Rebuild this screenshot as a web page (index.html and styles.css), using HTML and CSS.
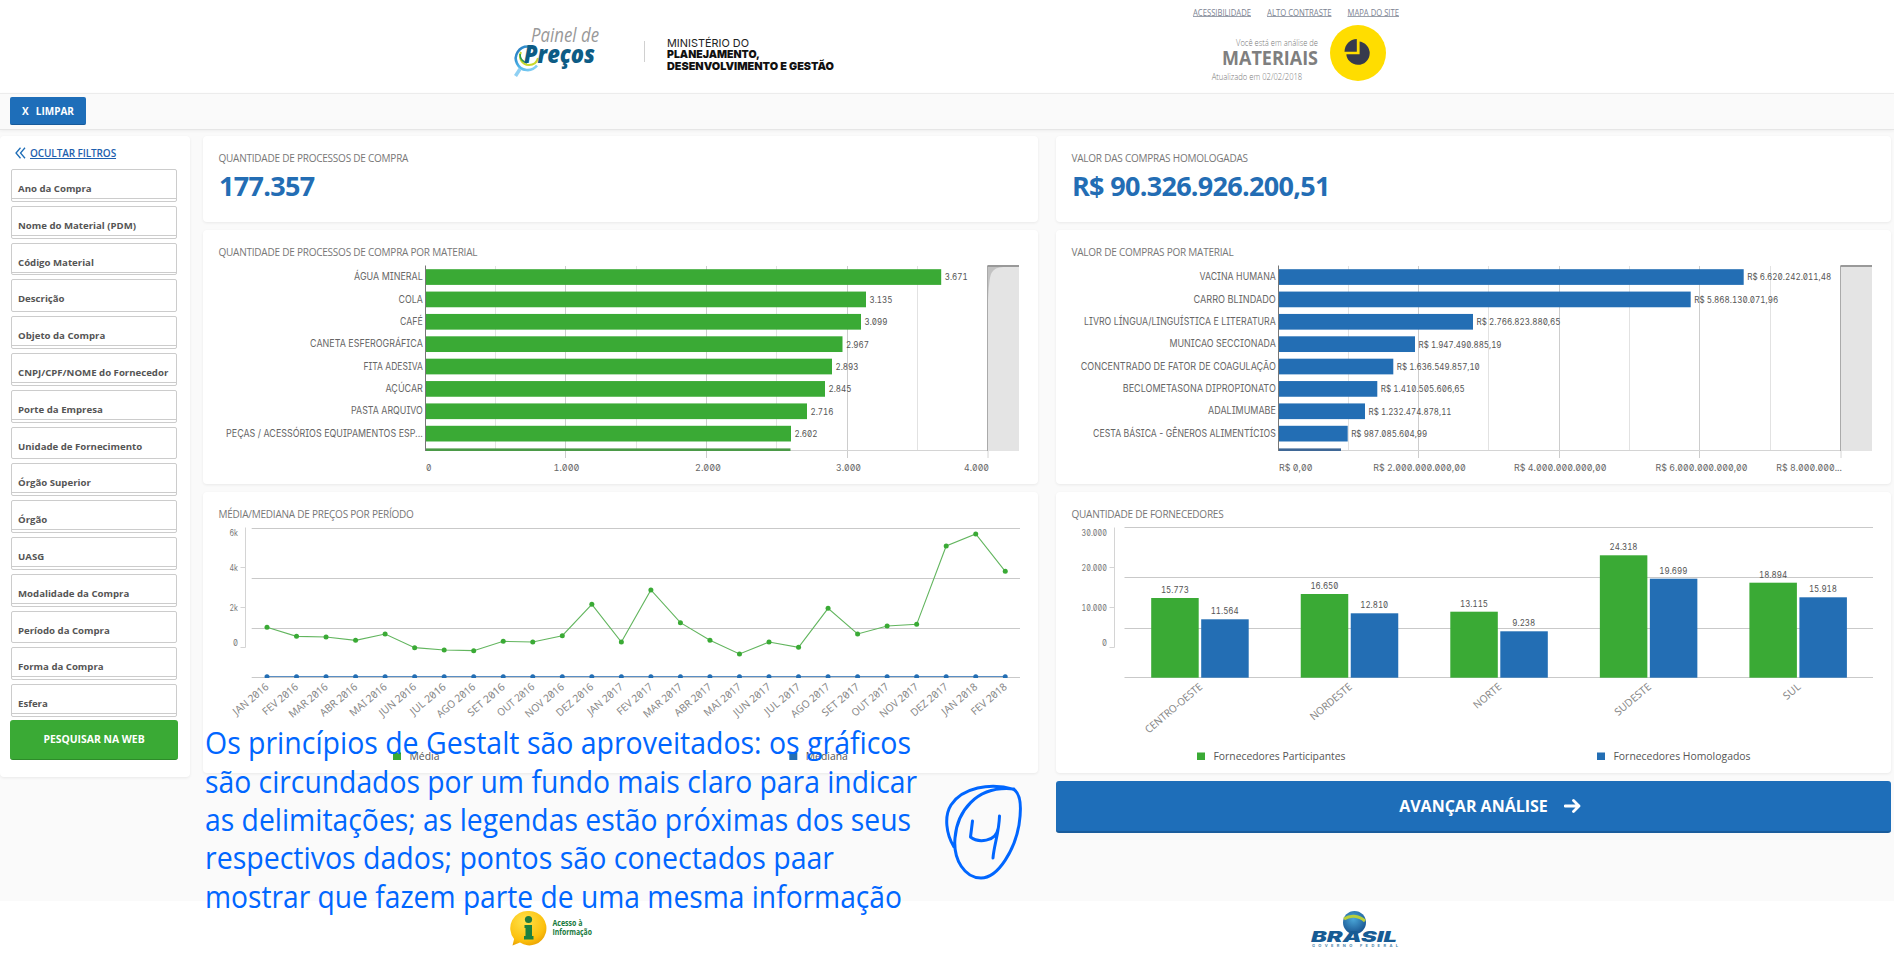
FILE: index.html
```html
<!DOCTYPE html>
<html lang="pt-BR">
<head>
<meta charset="utf-8">
<title>Painel de Preços</title>
<link rel="stylesheet" href="styles.css">
</head>
<body>
<header class="header">
  <svg class="brand" width="340" height="93" viewBox="500 0 340 93">
    <defs>
      <linearGradient id="ring" x1="0" y1="0" x2="1" y2="1"><stop offset="0" stop-color="#1b6fb8"/><stop offset=".5" stop-color="#4fb6ea"/><stop offset="1" stop-color="#8fd3f5"/></linearGradient>
    </defs>
    <path d="M520 69l-4.500 7" stroke="#8fd0f3" stroke-width="3.500" fill="none"/>
    <path d="M528 46.500a11.800 11.800 0 1 0 9 19" stroke="url(#ring)" stroke-width="2.600" fill="none"/>
    <path d="M521 52c-3 6 1 13 8 13 5 0 8-3 9-7" stroke="#c9d82a" stroke-width="2" fill="none"/>
    <path d="M520 54c0 5 3 8 7 9" stroke="#2f9a4a" stroke-width="1.600" fill="none"/>
    <text class="logo-top" x="531" y="42" textLength="68" lengthAdjust="spacingAndGlyphs">Painel de</text>
    <text class="logo-main" x="524" y="63" textLength="71" lengthAdjust="spacingAndGlyphs">Preços</text>
    <path d="M644.500 41v21" stroke="#d0d0d0"/>
    <text class="gov" x="667" y="46.500" textLength="82" lengthAdjust="spacingAndGlyphs">MINISTÉRIO DO</text>
    <text class="gov heavy" x="667" y="58" textLength="93" lengthAdjust="spacingAndGlyphs">PLANEJAMENTO,</text>
    <text class="gov heavy" x="667" y="69.500" textLength="167" lengthAdjust="spacingAndGlyphs">DESENVOLVIMENTO E GESTÃO</text>
  </svg>
  <svg class="status" width="220" height="93" viewBox="1190 0 220 93">
    <g class="toplink">
      <text x="1193" y="15.500" textLength="58" lengthAdjust="spacingAndGlyphs">ACESSIBILIDADE</text>
      <text x="1267" y="15.500" textLength="64.500" lengthAdjust="spacingAndGlyphs">ALTO CONTRASTE</text>
      <text x="1347.500" y="15.500" textLength="51.500" lengthAdjust="spacingAndGlyphs">MAPA DO SITE</text>
    </g>
    <path d="M1193 16.500h58M1267 16.500h64.500M1347.500 16.500h51.500" stroke="#9aa0ab"/>
    <text class="faint" x="1236" y="45.500" textLength="82" lengthAdjust="spacingAndGlyphs">Você está em análise de</text>
    <text class="mode" x="1222" y="64.500" textLength="96" lengthAdjust="spacingAndGlyphs">MATERIAIS</text>
    <text class="faint" x="1211.700" y="80" textLength="90.500" lengthAdjust="spacingAndGlyphs">Atualizado em 02/02/2018</text>
    <circle cx="1358" cy="53" r="28" fill="#fd0"/>
    <path d="M1358.500 41.300v11.700h-12.500a11.700 11.700 0 1 0 12.500-11.700z" fill="#363a4d" transform="translate(0.300 .2)"/>
    <path d="M1344 53.300h14.600v-15" fill="none" stroke="#fd0" stroke-width="2"/>
    <path d="M1356.800 39v12.700h-12.300c0-7 5.500-12.500 12.300-12.700z" fill="#363a4d"/>
  </svg>
</header>
<div class="toolbar"><button class="clear"><span>X</span><span>LIMPAR</span></button></div>
<main class="main">
  <aside class="card sidebar">
    <a class="hide"><svg width="11" height="12" viewBox="0 0 11 12"><path d="M5.500 .8L1 6l4.500 5.200M10 .8L5.500 6l4.500 5.200" fill="none" stroke="#1e6db7" stroke-width="1.300"/></svg><span>OCULTAR FILTROS</span></a>
    <div class="filters">
      <div class="filter lined"><span>Ano da Compra</span></div>
      <div class="filter lined"><span>Nome do Material (PDM)</span></div>
      <div class="filter lined"><span>Código Material</span></div>
      <div class="filter"><span>Descrição</span></div>
      <div class="filter lined"><span>Objeto da Compra</span></div>
      <div class="filter lined"><span>CNPJ/CPF/NOME do Fornecedor</span></div>
      <div class="filter lined"><span>Porte da Empresa</span></div>
      <div class="filter"><span>Unidade de Fornecimento</span></div>
      <div class="filter lined"><span>Órgão Superior</span></div>
      <div class="filter lined"><span>Órgão</span></div>
      <div class="filter lined"><span>UASG</span></div>
      <div class="filter lined"><span>Modalidade da Compra</span></div>
      <div class="filter"><span>Período da Compra</span></div>
      <div class="filter lined"><span>Forma da Compra</span></div>
      <div class="filter lined"><span>Esfera</span></div>
    </div>
    <button class="search">PESQUISAR NA WEB</button>
  </aside>
  <section class="column">
    <div class="card kpi"><h2>QUANTIDADE DE PROCESSOS DE COMPRA</h2><p>177.357</p></div>
    <div class="card bars"><h2>QUANTIDADE DE PROCESSOS DE COMPRA POR MATERIAL</h2><svg id="processos" width="835" height="224" viewBox="203 260 835 224"></svg></div>
    <div class="card trend"><h2>MÉDIA/MEDIANA DE PREÇOS POR PERÍODO</h2><svg id="precos" width="835" height="251" viewBox="203 522 835 251"></svg></div>
  </section>
  <section class="column">
    <div class="card kpi"><h2>VALOR DAS COMPRAS HOMOLOGADAS</h2><p>R$ 90.326.926.200,51</p></div>
    <div class="card bars"><h2>VALOR DE COMPRAS POR MATERIAL</h2><svg id="valores" width="835" height="224" viewBox="1056 260 835 224"></svg></div>
    <div class="card trend"><h2>QUANTIDADE DE FORNECEDORES</h2><svg id="fornecedores" width="835" height="251" viewBox="1056 522 835 251"></svg></div>
    <button class="advance"><span>AVANÇAR ANÁLISE</span><svg width="18" height="16" viewBox="0 0 18 16"><path d="M1 8h14M9.500 2.500l5.500 5.500-5.500 5.500" fill="none" stroke="#fff" stroke-width="2.800" stroke-linejoin="round" stroke-linecap="round"/></svg></button>
  </section>
</main>
<footer class="footer">
  <svg width="90" height="55" viewBox="505 901 90 55">
    <defs><radialGradient id="gold" cx=".4" cy=".3" r=".8"><stop offset="0" stop-color="#ffe24a"/><stop offset=".7" stop-color="#fcc00d"/><stop offset="1" stop-color="#e59a00"/></radialGradient></defs>
    <path d="M529 911a17 17.200 0 1 1-9 31.500l-7.500 3 1.600-6.500a17 17.200 0 0 1 14.900-28z" fill="url(#gold)"/>
    <circle cx="528.500" cy="919.500" r="3.600" fill="#1f7a3e"/>
    <path d="M524.500 925h7.500v11h1.500v3.500h-9.500v-3.500h1.500v-8h-1z" fill="#1a8040"/>
    <text class="access" x="552.500" y="926" textLength="30" lengthAdjust="spacingAndGlyphs">Acesso à</text>
    <text class="access" x="552.500" y="935" textLength="39.500" lengthAdjust="spacingAndGlyphs">Informação</text>
  </svg>
  <svg width="96" height="55" viewBox="1308 901 96 55">
    <defs><radialGradient id="globe" cx=".45" cy=".35" r=".7"><stop offset="0" stop-color="#4aa6d8"/><stop offset="1" stop-color="#154f8c"/></radialGradient></defs>
    <circle cx="1354.500" cy="922.500" r="11.500" fill="url(#globe)"/>
    <path d="M1344 919c6-4 14-4 21 2" fill="none" stroke="#b9cf3a" stroke-width="3"/>
    <text class="brasil" x="1311" y="941.500" textLength="86" lengthAdjust="spacingAndGlyphs">BRASIL</text>
    <text class="federal" x="1312" y="946.500" textLength="86">GOVERNO FEDERAL</text>
  </svg>
</footer>
<svg class="note" width="840" height="208" viewBox="200 710 840 208">
  <text x="205" y="754" textLength="706" lengthAdjust="spacingAndGlyphs">Os princípios de Gestalt são aproveitados: os gráficos</text>
  <text x="205" y="792.500" textLength="712" lengthAdjust="spacingAndGlyphs">são circundados por um fundo mais claro para indicar</text>
  <text x="205" y="830.500" textLength="706" lengthAdjust="spacingAndGlyphs">as delimitações; as legendas estão próximas dos seus</text>
  <text x="205" y="869" textLength="629" lengthAdjust="spacingAndGlyphs">respectivos dados; pontos são conectados paar</text>
  <text x="205" y="907.500" textLength="697" lengthAdjust="spacingAndGlyphs">mostrar que fazem parte de uma mesma informação</text>
  <g fill="none" stroke="#06f" stroke-width="3" stroke-linecap="round" stroke-linejoin="round">
    <path d="M954 847C946 834 944 816 951 805C962 788 990 782 1014 789.500C1022 795 1021 812 1019 825C1015 848 999 878 981 878C965 878 953 860 955 838C957 813 975 785 1014 789"/>
    <path d="M972.500 821L970.500 837C978 843 996 842 998 829M999.500 816C999 833 994 845 993 858"/>
  </g>
</svg>
<script src="charts.js"></script>
</body>
</html>
```

FILE: styles.css
```css
* { box-sizing: border-box; }
body { margin: 0; width: 1894px; height: 956px; overflow: hidden; position: relative; background: #fafafa; font-family: "Open Sans", sans-serif; color: #555; }
svg { display: block; }
button { border: 0; padding: 0; color: #fff; font-family: inherit; font-weight: 700; }
.header { height: 93px; display: flex; background: #fff; }
.brand { margin-left: 500px; }
.status { margin-left: 350px; }
.logo-top { font-size: 20px; font-style: italic; font-weight: 400; fill: #999; }
.logo-main { font-size: 24px; font-style: italic; font-weight: 800; fill: #0d5c85; }
.gov { font: 400 11px Inter, sans-serif; fill: #222; }
.gov.heavy { font-weight: 900; fill: #111; }
.toplink { font-size: 8.5px; fill: #7c8392; }
.faint { font-size: 8.5px; font-weight: 300; fill: #777; }
.mode { font-size: 20px; font-weight: 700; fill: #7f7f7f; }
.toolbar { height: 37px; padding: 3px 10px; border-top: 1px solid #ececec; border-bottom: 1px solid #e6e6e6; box-shadow: 0 1px 3px #0000000d; }
.clear { display: flex; align-items: center; justify-content: center; gap: 7px; width: 76px; height: 28px; background: #1e6eb9; border-bottom: 1px solid #175a9a; border-radius: 2px; font-size: 10px; }
.main { display: flex; align-items: flex-start; padding-top: 6px; height: 771px; }
.card { background: #fff; border-radius: 4px; box-shadow: 0 1px 3px #00000012; }
.sidebar { width: 190px; height: 641px; padding: 9px 10px 0; }
.hide { display: flex; align-items: center; gap: 4.5px; height: 16px; margin-left: 4.5px; color: #1e5fae; font-size: 10px; font-weight: 600; letter-spacing: -.1px; text-decoration: underline; }
.filters { display: flex; flex-direction: column; gap: 4px; margin-top: 8px; }
.filter { height: 32.8px; width: 166px; margin-left: 1px; padding: 11px 0 0 6px; border: 1px solid #ccc; border-radius: 2px; font-size: 9.65px; line-height: 15px; font-weight: 700; white-space: nowrap; }
.lined { background: linear-gradient(#ccc, #ccc) 0 28px / 100% 1px no-repeat; }
.search { display: block; width: 168px; height: 40px; margin-top: 3px; border-radius: 3px; background: #3aaa35; border-bottom: 1px solid #2e8b2a; font-size: 10.4px; }
.column { width: 835px; margin-left: 13px; display: flex; flex-direction: column; gap: 8px; }
.column + .column { margin-left: 18px; }
h2 { margin: 0; padding-left: 15.5px; font-size: 10px; line-height: 14px; font-weight: 400; letter-spacing: -.23px; color: #777; }
.kpi { height: 86px; padding-top: 15px; }
.kpi p { margin: 3px 0 0 16px; font-size: 27px; line-height: 36px; font-weight: 700; letter-spacing: -.7px; color: #236db4; }
.bars { height: 254px; }
.trend { height: 281px; }
.bars h2, .trend h2 { height: 30px; padding-top: 15px; }
.advance { height: 52px; display: flex; align-items: center; justify-content: center; gap: 16px; padding-left: 34px; background: #1e6eb9; border-bottom: 2px solid #195c9c; border-radius: 3px; font-size: 16px; }
.footer { height: 55px; background: #fff; display: flex; padding-left: 505px; gap: 713px; }
.access { font-size: 8px; font-weight: 700; fill: #17793c; }
.brasil { font: italic 900 15px Inter, sans-serif; fill: #175b94; }
.federal { font: 700 4px Inter, sans-serif; fill: #4c86ac; }
.note { position: absolute; left: 200px; top: 710px; font-size: 31px; fill: #06f; }
.cat { font: 10.5px Inter, sans-serif; font-feature-settings: "zero", "cv08"; fill: #666; }
.val { font: 8.5px Inter, sans-serif; font-feature-settings: "zero", "tnum"; fill: #555; }
.tick { font: 9.5px Inter, sans-serif; font-feature-settings: "zero", "tnum"; fill: #666; }
.small { font: 8.5px Inter, sans-serif; font-feature-settings: "zero", "tnum"; fill: #777; }
.slant { font: 10.5px "Noto Sans", sans-serif; font-feature-settings: "zero"; fill: #888; }
.legend { font: 10px "Open Sans", sans-serif; fill: #555; }
```

FILE: charts.js
```js
const NS = 'http://www.w3.org/2000/svg';
const GREEN = '#3aaa35', BLUE = '#236eb4';

function add(svg, tag, attrs, content) {
  const el = document.createElementNS(NS, tag);
  for (const k in attrs) el.setAttribute(k, attrs[k]);
  if (content !== undefined) el.textContent = content;
  svg.appendChild(el);
}
function line(svg, x1, y1, x2, y2, stroke) {
  add(svg, 'line', { x1, y1, x2, y2, stroke });
}
function text(svg, cls, x, y, str, width, extra) {
  add(svg, 'text', Object.assign({ class: cls, x, y, textLength: width, lengthAdjust: 'spacingAndGlyphs' }, extra), str);
}

function horizontalBars(id, o) {
  const s = document.getElementById(id);
  for (let i = 1; i < 8; i++) {
    const x = Math.round(o.x + i * o.step) - .5;
    line(s, x, 266, x, i % 2 ? 451 : 458, i % 2 ? '#e2e2e2' : '#cdcdcd');
  }
  line(s, o.x, 450.5, o.map, 450.5, '#d4d4d4');
  line(s, o.map + .5, 451, o.map + .5, 458, '#d4d4d4');
  o.rows.forEach(([name, nameW, end, value, valueW], i) => {
    const y = 269.2 + i * 22.37;
    add(s, 'rect', { x: o.x, y, width: end - o.x, height: 15.7, fill: o.color });
    text(s, 'cat', o.x - 2.7 - nameW, y + 11, name, nameW);
    text(s, 'val', end + 3.5, y + 11.2, value, valueW);
  });
  add(s, 'rect', { x: o.x, y: 448.4, width: o.lastEnd - o.x, height: 2.6, fill: o.dark });
  line(s, o.x, 265.5, o.x, 451, '#777');
  add(s, 'rect', { x: o.map, y: 265, width: o.mapW, height: 186, fill: '#e4e4e4' });
  if (o.curve) add(s, 'path', { d: `M${o.map} 267h16q-9 0-12 6t-3 28z`, fill: '#c2c2c2' });
  line(s, o.map, 266, o.map, 451, '#aaa');
  add(s, 'rect', { x: o.map, y: 265, width: o.mapW, height: 2, fill: '#999' });
  o.ticks.forEach(([x, w, label]) => text(s, 'tick', x, 470.7, label, w));
}

horizontalBars('processos', {
  x: 425.5, step: 70.35, map: 987.5, mapW: 31.5, color: GREEN, dark: '#4b9a47', lastEnd: 790.5, curve: true,
  rows: [
    ['ÁGUA MINERAL', 68.7, 941.2, '3.671', 23], ['COLA', 24.3, 866, '3.135', 23],
    ['CAFÉ', 22.7, 861, '3.099', 23], ['CANETA ESFEROGRÁFICA', 112.7, 842.5, '2.967', 23],
    ['FITA ADESIVA', 59.3, 832, '2.893', 23], ['AÇÚCAR', 37.3, 825, '2.845', 23],
    ['PASTA ARQUIVO', 71.7, 807, '2.716', 23], ['PEÇAS / ACESSÓRIOS EQUIPAMENTOS ESP...', 196.7, 791, '2.602', 23]
  ],
  ticks: [[426, 5.5, '0'], [553.5, 26, '1.000'], [695, 26, '2.000'], [836, 25, '3.000'], [964, 25, '4.000']]
});
horizontalBars('valores', {
  x: 1278.5, step: 70.3, map: 1840.5, mapW: 31.5, color: BLUE, dark: '#3f6796', lastEnd: 1341,
  rows: [
    ['VACINA HUMANA', 76.3, 1743.7, 'R$ 6.620.242.011,48', 84], ['CARRO BLINDADO', 82.3, 1690.7, 'R$ 5.868.130.071,96', 84],
    ['LIVRO LÍNGUA/LINGUÍSTICA E LITERATURA', 191.7, 1473, 'R$ 2.766.823.880,65', 84], ['MUNICAO SECCIONADA', 106.3, 1415, 'R$ 1.947.490.885,19', 83],
    ['CONCENTRADO DE FATOR DE COAGULAÇÃO', 195, 1393.3, 'R$ 1.636.549.857,10', 83], ['BECLOMETASONA DIPROPIONATO', 153, 1377.3, 'R$ 1.410.505.606,65', 84],
    ['ADALIMUMABE', 67.7, 1365, 'R$ 1.232.474.878,11', 83], ['CESTA BÁSICA - GÊNEROS ALIMENTÍCIOS', 182.7, 1347.7, 'R$ 987.085.604,99', 76]
  ],
  ticks: [[1279, 33.5, 'R$ 0,00'], [1373.3, 92.4, 'R$ 2.000.000.000,00'], [1514, 92.5, 'R$ 4.000.000.000,00'], [1655.5, 92, 'R$ 6.000.000.000,00'], [1776.3, 65.5, 'R$ 8.000.000...']]
});

function frame(s, axisX, x1, x2, ys, labels) {
  ys.forEach(y => line(s, x1, y, x2, y, '#c9c9c9'));
  line(s, axisX, 527.5, axisX, 647.5, '#d4d4d4');
  [567.5, 607.5, 647.5].forEach(y => line(s, axisX - 5, y, axisX, y, '#d4d4d4'));
  labels.forEach(([label, w], i) => text(s, 'small', axisX - 7.5 - w, [535.7, 570.7, 610.7, 646][i], label, w));
}
function legend(s, x, color, label, w) {
  add(s, 'rect', { x, y: 752.5, width: 8, height: 7.5, fill: color });
  text(s, 'legend', x + 16.5, 759.7, label, w);
}
function slanted(s, x, y, label, w) {
  text(s, 'slant', x - w, y, label, w, { transform: `rotate(-40 ${x} ${y})` });
}

const precos = document.getElementById('precos');
frame(precos, 245.5, 251.7, 1020, [528.5, 578.5, 628.5, 677.5], [['6k', 8.5], ['4k', 8.5], ['2k', 8.5], ['0', 5]]);
const media = [442, 469, 471, 481, 462, 503, 510, 512, 484, 486, 467, 373, 486, 330, 428, 481, 522, 486, 502, 385, 462, 438, 433, 198, 162, 274]
  .map((v, i) => [267 + i * 29.53, 480 + v / 3]);
add(precos, 'polyline', { points: media.join(' '), fill: 'none', stroke: '#62b55e', 'stroke-width': 1.1 });
line(precos, 267, 676.5, 1005.3, 676.5, '#5a8fc4');
const months = ['JAN', 'FEV', 'MAR', 'ABR', 'MAI', 'JUN', 'JUL', 'AGO', 'SET', 'OUT', 'NOV', 'DEZ'];
media.forEach(([x, y], i) => {
  add(precos, 'circle', { cx: x, cy: y, r: 2.5, fill: GREEN });
  add(precos, 'path', { d: `M${x - 2.2} 678a2.5 2.5 0 1 1 4.400 0z`, fill: BLUE });
  const m = months[i % 12];
  slanted(precos, x + 2.5, 688, m + ' ' + (2016 + Math.floor(i / 12)), /MAR|AGO|NOV/.test(m) ? 47 : /JUL|JAN|FEV/.test(m) ? 43 : 45);
});
legend(precos, 393, GREEN, 'Média', 30);
legend(precos, 789.3, BLUE, 'Mediana', 42);

const forn = document.getElementById('fornecedores');
frame(forn, 1114.5, 1124.5, 1873, [527.5, 577.5, 628.5, 677.5], [['30.000', 25.5], ['20.000', 25.5], ['10.000', 25.5], ['0', 5]]);
[
  ['CENTRO-OESTE', 71, 598, '15.773', 619.3, '11.564'],
  ['NORDESTE', 51, 594, '16.650', 613.3, '12.810'],
  ['NORTE', 33, 611.7, '13.115', 631.3, '9.238'],
  ['SUDESTE', 44, 555.3, '24.318', 578.7, '19.699'],
  ['SUL', 19, 582.7, '18.894', 597.3, '15.918']
].forEach(([name, w, y1, v1, y2, v2], i) => {
  const x = 1151.2 + i * 149.55;
  add(forn, 'rect', { x, y: y1, width: 47.5, height: 677.7 - y1, fill: GREEN });
  add(forn, 'rect', { x: x + 50, y: y2, width: 47.5, height: 677.7 - y2, fill: BLUE });
  const w2 = v2.length < 6 ? 23 : 28;
  text(forn, 'val', x + 9.7, y1 - 5, v1, 28);
  text(forn, 'val', x + 73.5 - w2 / 2, y2 - 5, v2, w2);
  slanted(forn, x + 52, 688, name, w);
});
legend(forn, 1197, GREEN, 'Fornecedores Participantes', 132);
legend(forn, 1597, BLUE, 'Fornecedores Homologados', 137);
```
